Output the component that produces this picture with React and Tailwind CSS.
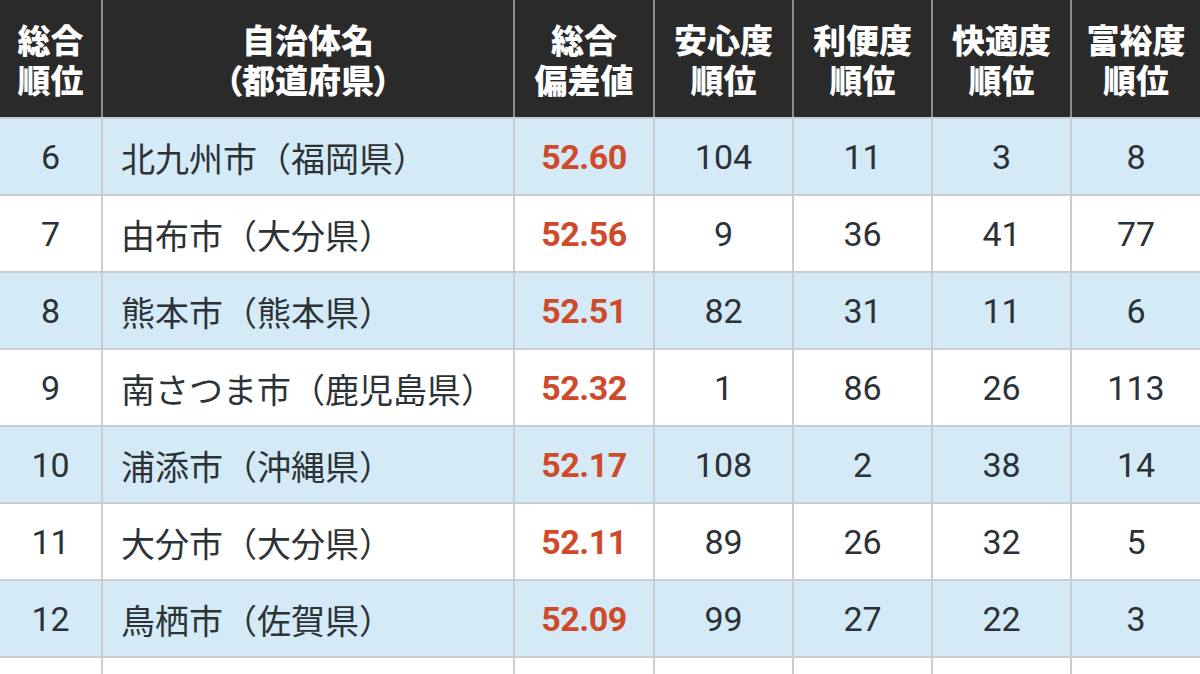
import React from "react";

const rows = [
  ["6", "北九州市（福岡県）", "52.60", "104", "11", "3", "8"],
  ["7", "由布市（大分県）", "52.56", "9", "36", "41", "77"],
  ["8", "熊本市（熊本県）", "52.51", "82", "31", "11", "6"],
  ["9", "南さつま市（鹿児島県）", "52.32", "1", "86", "26", "113"],
  ["10", "浦添市（沖縄県）", "52.17", "108", "2", "38", "14"],
  ["11", "大分市（大分県）", "52.11", "89", "26", "32", "5"],
  ["12", "鳥栖市（佐賀県）", "52.09", "99", "27", "22", "3"],
  ["", "", "", "", "", "", ""],
];

const headers = [
  ["総合", "順位"],
  ["自治体名", "（都道府県）"],
  ["総合", "偏差値"],
  ["安心度", "順位"],
  ["利便度", "順位"],
  ["快適度", "順位"],
  ["富裕度", "順位"],
];

const cols = "grid grid-cols-[101px_410px_138px_137px_137px_137px_1fr] gap-x-[2px]";
const jp = "font-['Noto_Sans_CJK_JP','Noto_Sans',sans-serif]";
const num = "font-['Roboto','Noto_Sans_CJK_JP',sans-serif]";

export default function App() {
  return (
    <div className="w-[1200px] h-[674px] overflow-hidden bg-[#c9cdd0]">
      <div className={`${cols} bg-[#8c8c8c] h-[117px]`}>
        {headers.map((h, i) => (
          <div
            key={i}
            className={`bg-[#2a2a2a] flex flex-col items-center justify-center text-white font-black text-[33px] leading-[40px] ${jp} [font-feature-settings:'palt']`}
          >
            <span>{h[0]}</span>
            <span>{h[1]}</span>
          </div>
        ))}
      </div>
      <div className="flex flex-col gap-y-[2px] pt-[2px]">
        {rows.map((r, ri) => {
          const bg = ri % 2 === 0 ? "bg-[#d4eaf6]" : "bg-white";
          return (
            <div key={ri} className={`${cols} h-[75px] shrink-0`}>
              {r.map((c, ci) => {
                if (ci === 1) {
                  return (
                    <div
                      key={ci}
                      className={`${bg} flex items-center pl-[18px] pt-[2px] text-[34px] text-[#2c3236] ${jp}`}
                    >
                      {c}
                    </div>
                  );
                }
                if (ci === 2) {
                  return (
                    <div
                      key={ci}
                      className={`${bg} flex items-center justify-center pt-[2px] text-[34px] font-bold tracking-[-0.5px] text-[#cf4a2b] ${num}`}
                    >
                      {c}
                    </div>
                  );
                }
                return (
                  <div
                    key={ci}
                    className={`${bg} flex items-center justify-center pt-[2px] text-[34px] text-[#2b3136] ${num}`}
                  >
                    {c}
                  </div>
                );
              })}
            </div>
          );
        })}
      </div>
    </div>
  );
}
